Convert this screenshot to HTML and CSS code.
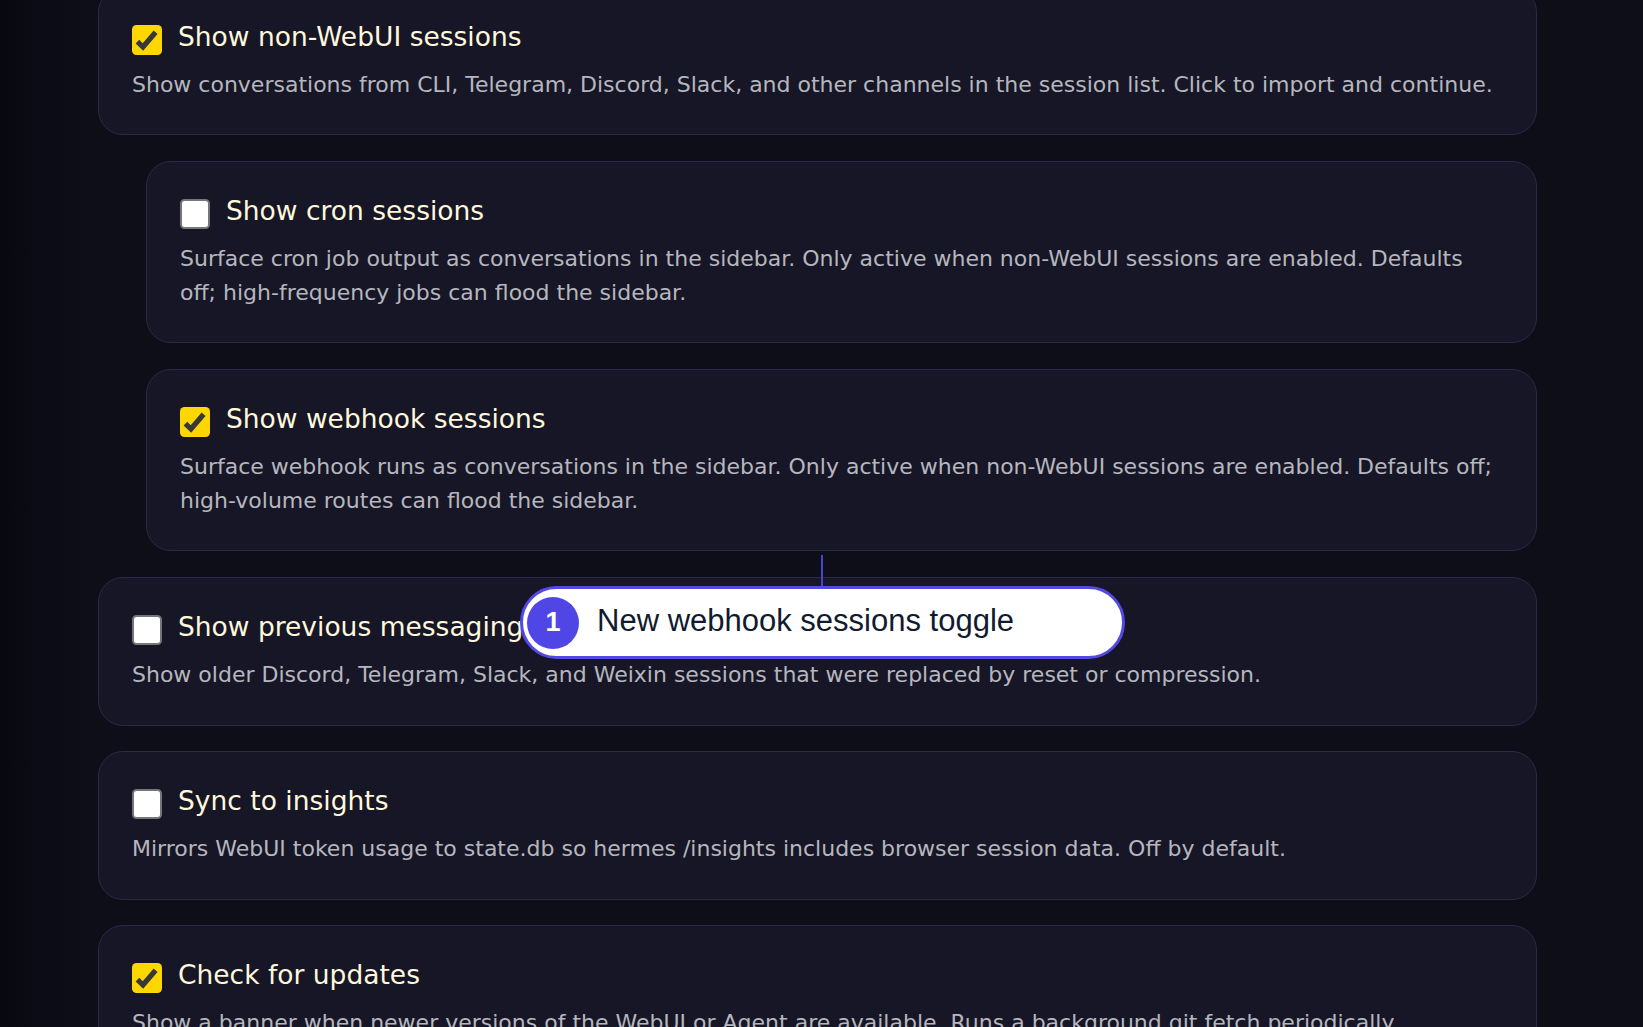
FILE: index.html
```html
<!DOCTYPE html>
<html lang="en">
<head>
<meta charset="utf-8">
<title>Settings</title>
<link rel="stylesheet" href="styles.css">
</head>
<body>
<div class="page">
  <div class="list">
    <div class="card">
      <label class="row"><span class="box on"><svg viewBox="0 0 30 30" width="30" height="30"><path d="M5.4 16.6 L11 22 L23.6 7.2"/></svg></span><span class="title">Show non-WebUI sessions</span></label>
      <p class="desc">Show conversations from CLI, Telegram, Discord, Slack, and other channels in the session list. Click to import and continue.</p>
    </div>
    <div class="card sub">
      <label class="row"><span class="box"></span><span class="title">Show cron sessions</span></label>
      <p class="desc">Surface cron job output as conversations in the sidebar. Only active when non-WebUI sessions are enabled. Defaults off; high-frequency jobs can flood the sidebar.</p>
    </div>
    <div class="card sub">
      <label class="row"><span class="box on"><svg viewBox="0 0 30 30" width="30" height="30"><path d="M5.4 16.6 L11 22 L23.6 7.2"/></svg></span><span class="title">Show webhook sessions</span></label>
      <p class="desc">Surface webhook runs as conversations in the sidebar. Only active when non-WebUI sessions are enabled. Defaults off; high-volume routes can flood the sidebar.</p>
    </div>
    <div class="card">
      <label class="row"><span class="box"></span><span class="title">Show previous messaging sessions</span></label>
      <p class="desc">Show older Discord, Telegram, Slack, and Weixin sessions that were replaced by reset or compression.</p>
    </div>
    <div class="card">
      <label class="row"><span class="box"></span><span class="title">Sync to insights</span></label>
      <p class="desc">Mirrors WebUI token usage to state.db so hermes /insights includes browser session data. Off by default.</p>
    </div>
    <div class="card">
      <label class="row"><span class="box on"><svg viewBox="0 0 30 30" width="30" height="30"><path d="M5.4 16.6 L11 22 L23.6 7.2"/></svg></span><span class="title">Check for updates</span></label>
      <p class="desc">Show a banner when newer versions of the WebUI or Agent are available. Runs a background git fetch periodically.</p>
    </div>
  </div>
  <div class="callout-line"></div>
  <div class="callout"><span class="num">1</span><span class="callout-text">New webhook sessions toggle</span></div>
</div>
</body>
</html>
```

FILE: styles.css
```css
html, body {
  margin: 0;
  padding: 0;
}
body {
  width: 1643px;
  height: 1027px;
  overflow: hidden;
  background: linear-gradient(90deg, #08080e 0px, #0c0c16 40px, #0e0e19 90px, #0e0e19 100%);
  font-family: "DejaVu Sans", sans-serif;
}
.page {
  position: relative;
  display: flow-root;
  height: 1027px;
}
.list {
  display: flex;
  flex-direction: column;
  gap: 25.8px;
  margin: -13px 0 0 98px;
  width: 1439px;
}
.card {
  background: #161626;
  border: 1px solid #2b2947;
  border-radius: 25px;
  padding: 32px 33px 32.3px 33px;
}
.card.sub {
  margin-left: 48px;
}
.row {
  display: flex;
  align-items: flex-start;
  gap: 16px;
}
.box {
  flex: none;
  width: 30px;
  height: 30px;
  margin: 5px 0;
  box-sizing: border-box;
  border-radius: 4.5px;
  background: #ffffff;
  border: 2px solid #767676;
}
.box.on {
  background: #ffd700;
  border: none;
}
.box svg {
  display: block;
}
.box svg path {
  fill: none;
  stroke: #383838;
  stroke-width: 5.2;
  stroke-linejoin: miter;
}
.title {
  font-size: 26.5px;
  line-height: 33px;
  color: #fff8dc;
}
.desc {
  margin: 8px 0 0 0;
  font-size: 22px;
  line-height: 34px;
  color: #b6b6be;
}
.callout-line {
  position: absolute;
  left: 821px;
  top: 555px;
  width: 2px;
  height: 32px;
  background: #4a43d0;
}
.callout {
  position: absolute;
  left: 520px;
  top: 586px;
  width: 605px;
  height: 73px;
  box-sizing: border-box;
  border: 3px solid #5249e6;
  border-radius: 40px;
  background: #ffffff;
  display: flex;
  align-items: center;
  padding-left: 4px;
}
.num {
  flex: none;
  width: 52px;
  height: 52px;
  border-radius: 50%;
  background: #4f46e5;
  color: #ffffff;
  font-family: "Liberation Sans", Arial, sans-serif;
  font-weight: bold;
  font-size: 27px;
  display: flex;
  align-items: center;
  justify-content: center;
}
.callout-text {
  margin-left: 18px;
  margin-top: -3px;
  font-family: "Liberation Sans", Arial, sans-serif;
  font-size: 31px;
  color: #111a2e;
  white-space: nowrap;
}
```
